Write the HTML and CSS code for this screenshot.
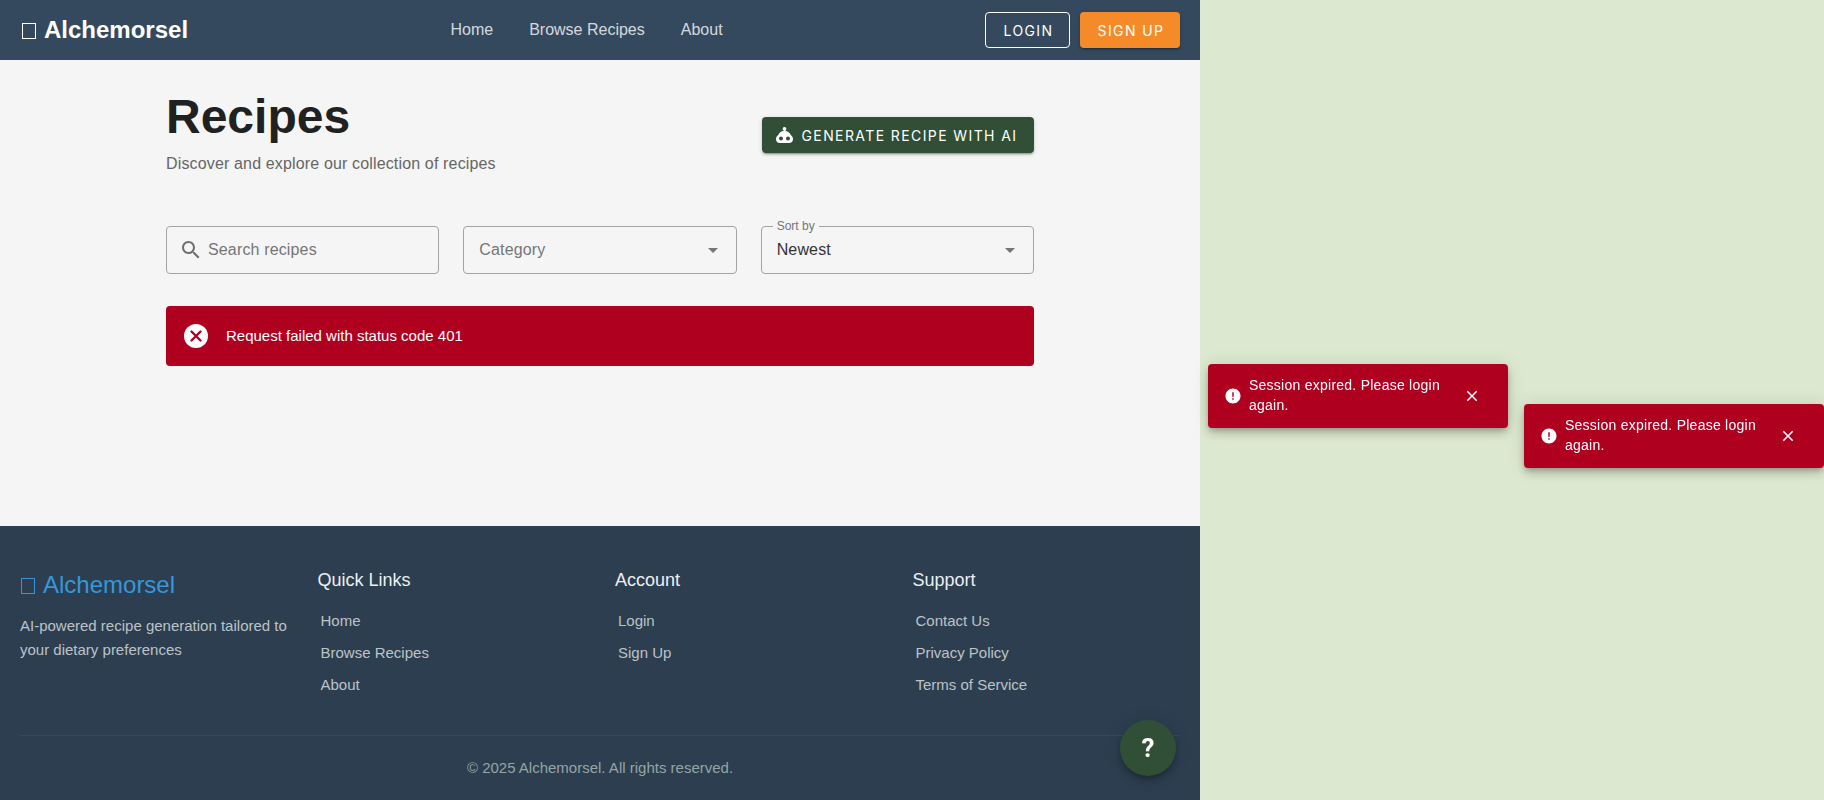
FILE: index.html
```html
<!DOCTYPE html>
<html lang="en">
<head>
<meta charset="utf-8">
<title>Alchemorsel</title>
<link rel="stylesheet" href="styles.css">
</head>
<body>
<div class="page">
  <header class="topbar">
    <a class="brand"><span class="tofu"></span>Alchemorsel</a>
    <nav class="nav"><a>Home</a><a>Browse Recipes</a><a>About</a></nav>
    <div class="auth">
      <button class="btn btn-outline">Login</button>
      <button class="btn btn-orange">Sign Up</button>
    </div>
  </header>
  <main class="main">
    <div class="container">
      <div class="title-row">
        <div class="title-block">
          <h1>Recipes</h1>
          <p>Discover and explore our collection of recipes</p>
        </div>
        <button class="btn btn-green">
          <svg class="robot" viewBox="0 0 17 16"><circle cx="8.500" cy="1.900" r="1.900" fill="currentColor"/><path fill="currentColor" fill-rule="evenodd" d="M8 3h1v1.100c3 .1 5 1.900 5.700 3.900C16 8.800 17 10.300 17 12c0 2.500-1.500 4-4 4H4c-2.500 0-4-1.500-4-4 0-1.700 1-3.200 2.300-4C3 6 5 4.200 8 4.100zM5 9.500a2 2 0 1 0 0 4 2 2 0 0 0 0-4zm7 0a2 2 0 1 0 0 4 2 2 0 0 0 0-4z"/></svg>
          Generate Recipe with AI
        </button>
      </div>
      <div class="filters">
        <div class="field">
          <svg class="field-icon" viewBox="0 0 24 24"><path fill="currentColor" d="M15.500 14h-.79l-.28-.27C15.410 12.590 16 11.110 16 9.500 16 5.910 13.090 3 9.500 3S3 5.910 3 9.500 5.910 16 9.500 16c1.610 0 3.090-.59 4.230-1.570l.27.28v.79l5 4.990L20.490 19l-4.990-5zm-6 0C7.010 14 5 11.990 5 9.500S7.010 5 9.500 5 14 7.010 14 9.500 11.990 14 9.500 14z"/></svg>
          <span class="placeholder">Search recipes</span>
        </div>
        <div class="field field-select">
          <span class="placeholder">Category</span>
          <svg class="caret" viewBox="0 0 24 24"><path fill="currentColor" d="M7 10l5 5 5-5z"/></svg>
        </div>
        <div class="field field-select">
          <span class="legend">Sort by</span>
          <span class="value">Newest</span>
          <svg class="caret" viewBox="0 0 24 24"><path fill="currentColor" d="M7 10l5 5 5-5z"/></svg>
        </div>
      </div>
      <div class="alert">
        <svg class="alert-icon" viewBox="0 0 24 24"><circle cx="12" cy="12" r="12" fill="#fff"/><path fill="none" stroke="#b00020" stroke-width="2.400" stroke-linecap="round" d="M7.500 7.500l9 9M16.500 7.500l-9 9"/></svg>
        <span class="alert-text">Request failed with status code 401</span>
      </div>
    </div>
  </main>
  <footer class="footer">
    <div class="footer-grid">
      <div class="footer-about">
        <div class="footer-brand"><span class="tofu"></span>Alchemorsel</div>
        <p>AI-powered recipe generation tailored to your dietary preferences</p>
      </div>
      <div class="footer-col">
        <h4>Quick Links</h4>
        <a>Home</a><a>Browse Recipes</a><a>About</a>
      </div>
      <div class="footer-col">
        <h4>Account</h4>
        <a>Login</a><a>Sign Up</a>
      </div>
      <div class="footer-col">
        <h4>Support</h4>
        <a>Contact Us</a><a>Privacy Policy</a><a>Terms of Service</a>
      </div>
    </div>
    <div class="copyright">© 2025 Alchemorsel. All rights reserved.</div>
  </footer>
</div>
<button class="fab">?</button>
<div class="toast toast-a">
  <svg class="toast-icon" viewBox="0 0 24 24"><path fill="currentColor" d="M12 2C6.480 2 2 6.480 2 12s4.480 10 10 10 10-4.480 10-10S17.520 2 12 2zm1 15h-2v-2h2v2zm0-4h-2V7h2v6z"/></svg>
  <span class="toast-text">Session expired. Please login again.</span>
  <svg class="toast-close" viewBox="0 0 24 24"><path fill="currentColor" d="M19 6.410 17.590 5 12 10.590 6.410 5 5 6.410 10.590 12 5 17.590 6.410 19 12 13.410 17.590 19 19 17.590 13.410 12z"/></svg>
</div>
<div class="toast toast-b">
  <svg class="toast-icon" viewBox="0 0 24 24"><path fill="currentColor" d="M12 2C6.480 2 2 6.480 2 12s4.480 10 10 10 10-4.480 10-10S17.520 2 12 2zm1 15h-2v-2h2v2zm0-4h-2V7h2v6z"/></svg>
  <span class="toast-text">Session expired. Please login again.</span>
  <svg class="toast-close" viewBox="0 0 24 24"><path fill="currentColor" d="M19 6.410 17.590 5 12 10.590 6.410 5 5 6.410 10.590 12 5 17.590 6.410 19 12 13.410 17.590 19 19 17.590 13.410 12z"/></svg>
</div>
</body>
</html>
```
FILE: styles.css
```css
* { box-sizing: border-box; }
html, body { margin: 0; padding: 0; }
body {
  background: #dce8cf;
  font-family: "Liberation Sans", Arial, sans-serif;
  height: 800px;
  overflow: hidden;
}
.page { width: 1200px; height: 800px; display: flex; flex-direction: column; }

.tofu {
  display: inline-block;
  width: 14px;
  height: 16px;
  border: 1px solid currentColor;
  margin: 0 8px 0 2px;
  vertical-align: -1px;
}

.topbar {
  height: 60px;
  background: #34495e;
  padding: 0 20px;
  display: flex;
  align-items: center;
  justify-content: space-between;
  flex: none;
}
.brand { color: #fff; font-size: 24px; font-weight: 700; }
.nav { display: flex; gap: 36px; font-size: 16px; color: rgba(255,255,255,.8); }
.auth { display: flex; gap: 10px; }

.btn {
  font-family: Inter, sans-serif;
  font-size: 14px;
  font-weight: 400;
  letter-spacing: 1.4px;
  text-transform: uppercase;
  height: 36px;
  border-radius: 4px;
  border: 0;
  color: #fff;
  display: inline-flex;
  align-items: center;
  justify-content: center;
}
.btn-outline { width: 85px; padding: 0 0 0 2px; background: transparent; border: 1px solid #fff; }
.btn-orange { width: 100px; padding: 0 0 0 2px; background: #f58b28; box-shadow: 0 3px 1px -2px rgba(0,0,0,.2), 0 2px 2px rgba(0,0,0,.14), 0 1px 5px rgba(0,0,0,.12); }
.btn-green { width: 272px; padding: 0 3px 0 0; background: #304f36; gap: 9px; box-shadow: 0 3px 1px -2px rgba(0,0,0,.2), 0 2px 2px rgba(0,0,0,.14), 0 1px 5px rgba(0,0,0,.12); }
.robot { width: 17px; height: 16px; flex: none; margin-top: -1px; }

.main { flex: 1; background: #f5f5f5; padding-top: 28px; }
.container { width: 868px; margin: 0 auto; }
.title-row { display: flex; justify-content: space-between; align-items: center; margin-bottom: 44px; }
.title-block { padding-bottom: 6px; }
.title-block h1 { margin: 0 0 6px; font-size: 48px; line-height: 58px; font-weight: 700; color: #212121; }
.title-block p { margin: 0; font-size: 16px; line-height: 24px; letter-spacing: .15px; color: #666; }

.filters { display: grid; grid-template-columns: repeat(3, 1fr); gap: 24px; margin-bottom: 32px; }
.field {
  position: relative;
  height: 48px;
  border: 1px solid #a3a3a3;
  border-radius: 4px;
  display: flex;
  align-items: center;
  padding: 0 14px;
  font-size: 16px;
  letter-spacing: .15px;
}
.field-select { justify-content: space-between; padding: 0 11px 0 15px; }
.field-icon { width: 24px; height: 24px; color: #6f6f6f; margin: 0 5px 0 -2px; flex: none; }
.placeholder { color: #757575; }
.value { color: #333; }
.caret { width: 24px; height: 24px; color: #757575; }
.legend {
  position: absolute;
  left: 11px;
  top: -8px;
  padding: 0 4px;
  font-size: 12px;
  line-height: 14px;
  letter-spacing: 0;
  color: #757575;
  background: #f5f5f5;
}

.alert {
  height: 60px;
  background: #b00020;
  border-radius: 4px;
  color: #fff;
  display: flex;
  align-items: center;
  padding: 0 18px;
  gap: 18px;
  font-size: 15px;
}
.alert-icon { width: 24px; height: 24px; flex: none; }
.alert-text { margin-bottom: 2px; }

.footer { flex: none; height: 274px; background: #2c3e50; padding: 40px 20px 0; }
.footer-grid { display: grid; grid-template-columns: repeat(4, 1fr); gap: 32px; height: 170px; padding-right: 2px; border-bottom: 1px solid rgba(255,255,255,.06); }
.footer-brand { font-size: 24px; line-height: 38px; color: #3498db; margin: 0 0 10px -1px; }
.footer-about p { margin: 0 -6px 0 0; font-size: 15px; line-height: 24px; color: #bdc3c7; }
.footer-col h4 { margin: 0 0 11px; font-size: 18px; line-height: 28px; font-weight: 400; color: #ecf0f1; }
.footer-col a { display: block; padding-left: 3px; font-size: 15px; line-height: 32px; color: #bdc3c7; }
.copyright { text-align: center; font-size: 15px; line-height: 20px; color: #95a5a6; margin-top: 22px; }

.fab {
  position: fixed;
  left: 1120px;
  top: 720px;
  width: 56px;
  height: 56px;
  padding: 0;
  border: 0;
  border-radius: 50%;
  background: #304f36;
  color: #fff;
  font-family: Roboto, sans-serif;
  font-size: 26px;
  font-weight: 700;
  box-shadow: 0 3px 5px -1px rgba(0,0,0,.2), 0 6px 10px rgba(0,0,0,.14), 0 1px 18px rgba(0,0,0,.12);
}

.toast {
  position: fixed;
  width: 300px;
  height: 64px;
  background: #b00020;
  border-radius: 4px;
  color: #fff;
  display: flex;
  align-items: center;
  padding: 0 14px 0 16px;
  font-size: 14px;
  line-height: 20px;
  letter-spacing: .25px;
  box-shadow: 0 3px 5px -1px rgba(0,0,0,.2), 0 6px 10px rgba(0,0,0,.14), 0 1px 18px rgba(0,0,0,.12);
}
.toast-a { left: 1208px; top: 364px; }
.toast-b { left: 1524px; top: 404px; }
.toast-icon { width: 18px; height: 18px; flex: none; margin-right: 7px; }
.toast-text { width: 200px; margin-bottom: 2px; }
.toast-close { width: 18px; height: 18px; margin-left: 14px; flex: none; }
```
